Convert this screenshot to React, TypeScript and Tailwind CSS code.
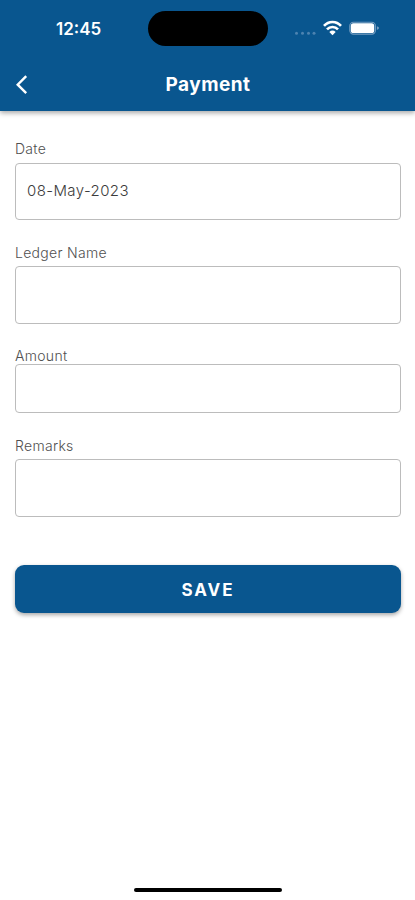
import React from "react";

type FieldProps = {
  label: string;
  value?: string;
  className: string;
  labelClass: string;
  boxClass: string;
};

function Field({ label, value, className, labelClass, boxClass }: FieldProps) {
  return (
    <div className={`flex flex-col ${className}`}>
      <label className={`text-[14px] leading-[18px] font-light tracking-[0.3px] text-[#505050] ${labelClass}`}>
        {label}
      </label>
      <div
        className={`flex items-center rounded-[4px] border-[1.5px] border-[#bcbcbc] pl-[11px] text-[15px] text-[#3c3c3c] ${boxClass}`}
      >
        {value && <span className="font-light tracking-[0.4px]">{value}</span>}
      </div>
    </div>
  );
}

function StatusIcons() {
  return (
    <div className="flex h-[20px] w-[86px]">
      <svg width="86" height="20" viewBox="0 0 86 20" fill="none">
        <g fill="#4d83b0">
          <circle cx="2.5" cy="14.2" r="1.5" />
          <circle cx="8.5" cy="14.2" r="1.5" />
          <circle cx="14.5" cy="14.2" r="1.5" />
          <circle cx="20" cy="14.2" r="1.5" />
        </g>
        <g stroke="#fff" strokeWidth="2.6">
          <path d="M30 6.9C34.6 1.6 42.4 1.6 47 6.9" />
          <path d="M33 10.4C36 7.1 41 7.1 44 10.4" />
        </g>
        <path d="M35.3 12.9Q38.5 10.2 41.7 12.9L38.5 16.3Z" fill="#fff" />
        <rect x="55.8" y="3.3" width="25.6" height="11.8" rx="3.6" stroke="#759dc1" strokeWidth="1.1" />
        <rect x="56.8" y="4.3" width="23.4" height="9.8" rx="2.6" fill="#fff" />
        <path d="M82.9 7.3Q85 8 85 9.1T82.9 10.9Z" fill="#759dc1" />
      </svg>
    </div>
  );
}

export default function App() {
  return (
    <div className="flex h-[900px] w-[415px] flex-col overflow-hidden bg-white font-['Inter',sans-serif]">
      <header className="h-[111px] shrink-0 bg-[#09568f] text-white shadow-[0_2px_5px_rgba(0,0,0,0.35)]">
        <div className="flex h-[58px] items-start">
          <div className="w-[148px] pt-[19px] pl-[56px] text-[17px] leading-[20px] font-semibold">
            12:45
          </div>
          <div className="mt-[11px] h-[35px] w-[120px] rounded-full bg-black" />
          <div className="mt-[19px] ml-[26px]">
            <StatusIcons />
          </div>
        </div>
        <div className="grid h-[53px] grid-cols-[48px_1fr_48px] items-center">
          <svg className="ml-[14px]" width="16" height="22" viewBox="0 0 16 22" fill="none">
            <path d="M12.2 2.2L3.7 10.7L12.2 19.2" stroke="#fff" strokeWidth="2.4" />
          </svg>
          <h1 className="pl-px text-center text-[19px] leading-[24px] font-bold tracking-[0.45px]">Payment</h1>
        </div>
      </header>

      <main className="flex flex-1 flex-col pr-[14px] pl-[15px]">
        <Field label="Date" value="08-May-2023" className="mt-[29px]" labelClass="h-[22.5px]" boxClass="h-[57.5px]" />
        <Field label="Ledger Name" className="mt-[23.5px]" labelClass="h-[22.5px]" boxClass="h-[57.5px]" />
        <Field label="Amount" className="mt-[23px]" labelClass="h-[17.5px]" boxClass="h-[49px]" />
        <Field label="Remarks" className="mt-[23.5px]" labelClass="h-[22.5px]" boxClass="h-[57.5px]" />
        <button className="mt-[48px] h-[48.5px] rounded-[9px] bg-[#09568f] pt-[3px] text-[17px] font-bold tracking-[1.9px] text-white shadow-[0_2px_4px_rgba(0,0,0,0.35)]">
          SAVE
        </button>
      </main>

      <footer className="flex h-[12px] shrink-0 justify-center">
        <div className="h-[4px] w-[148px] rounded-full bg-black" />
      </footer>
    </div>
  );
}
